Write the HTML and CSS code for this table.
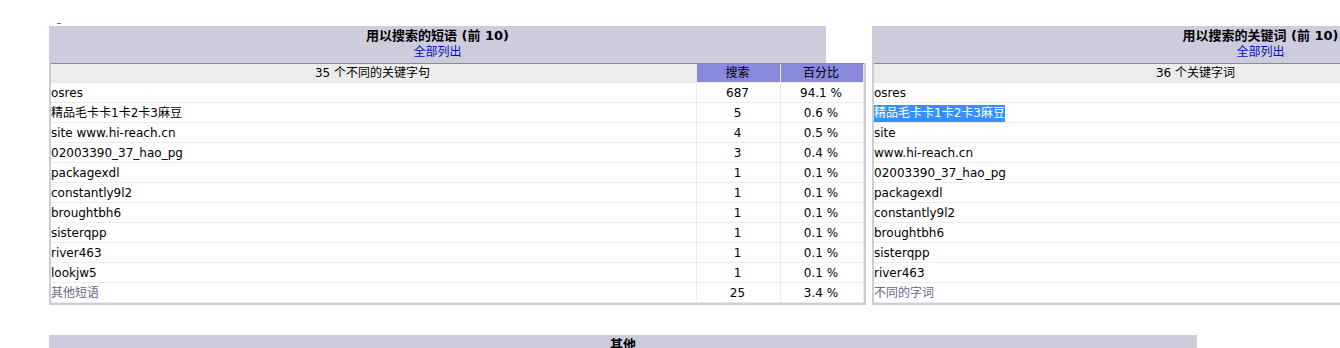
FILE: index.html
```html
<!DOCTYPE html>
<html lang="zh-CN">
<head>
<meta charset="utf-8">
<title>AWStats</title>
<link rel="stylesheet" href="styles.css">
</head>
<body>
<div class="page">
  <div class="topmark"><span class="dash"></span></div>

  <div class="pair">
    <section class="box">
      <div class="boxhead">
        <div class="title">用以搜索的短语 (前 10)<br><a href="#">全部列出</a></div>
        <div class="blank"></div>
      </div>
      <div class="boxbody">
        <table class="data">
          <thead>
            <tr>
              <th class="kw">35 个不同的关键字句</th>
              <th class="num">搜索</th>
              <th class="pct">百分比</th>
            </tr>
          </thead>
          <tbody>
            <tr><td class="aws">osres</td><td>687</td><td>94.1 %</td></tr>
            <tr><td class="aws">精品毛卡卡1卡2卡3麻豆</td><td>5</td><td>0.6 %</td></tr>
            <tr><td class="aws">site www.hi-reach.cn</td><td>4</td><td>0.5 %</td></tr>
            <tr><td class="aws">02003390_37_hao_pg</td><td>3</td><td>0.4 %</td></tr>
            <tr><td class="aws">packagexdl</td><td>1</td><td>0.1 %</td></tr>
            <tr><td class="aws">constantly9l2</td><td>1</td><td>0.1 %</td></tr>
            <tr><td class="aws">broughtbh6</td><td>1</td><td>0.1 %</td></tr>
            <tr><td class="aws">sisterqpp</td><td>1</td><td>0.1 %</td></tr>
            <tr><td class="aws">river463</td><td>1</td><td>0.1 %</td></tr>
            <tr><td class="aws">lookjw5</td><td>1</td><td>0.1 %</td></tr>
            <tr><td class="aws"><span class="muted">其他短语</span></td><td>25</td><td>3.4 %</td></tr>
          </tbody>
        </table>
      </div>
    </section>

    <section class="box">
      <div class="boxhead">
        <div class="title">用以搜索的关键词 (前 10)<br><a href="#">全部列出</a></div>
        <div class="blank"></div>
      </div>
      <div class="boxbody">
        <table class="data">
          <thead>
            <tr>
              <th class="kw">36 个关键字词</th>
              <th class="num">搜索</th>
              <th class="pct">百分比</th>
            </tr>
          </thead>
          <tbody>
            <tr><td class="aws">osres</td><td>687</td><td>93.8 %</td></tr>
            <tr><td class="aws"><span class="sel">精品毛卡卡1卡2卡3麻豆</span></td><td>5</td><td>0.6 %</td></tr>
            <tr><td class="aws">site</td><td>4</td><td>0.5 %</td></tr>
            <tr><td class="aws">www.hi-reach.cn</td><td>4</td><td>0.5 %</td></tr>
            <tr><td class="aws">02003390_37_hao_pg</td><td>3</td><td>0.4 %</td></tr>
            <tr><td class="aws">packagexdl</td><td>1</td><td>0.1 %</td></tr>
            <tr><td class="aws">constantly9l2</td><td>1</td><td>0.1 %</td></tr>
            <tr><td class="aws">broughtbh6</td><td>1</td><td>0.1 %</td></tr>
            <tr><td class="aws">sisterqpp</td><td>1</td><td>0.1 %</td></tr>
            <tr><td class="aws">river463</td><td>1</td><td>0.1 %</td></tr>
            <tr><td class="aws"><span class="muted">不同的字词</span></td><td>26</td><td>3.5 %</td></tr>
          </tbody>
        </table>
      </div>
    </section>
  </div>

  <section class="other">
    <div class="title wide">其他</div>
  </section>
</div>
</body>
</html>
```

FILE: styles.css
```css
html {
  overflow: hidden;
}

body {
  margin: 0;
  background: #ffffff;
  color: #000000;
  font-family: "DejaVu Sans", "Noto Sans CJK SC", sans-serif;
  font-size: 12px;
}

.page {
  width: 1640px;
  padding-left: 49px;
}

.topmark {
  height: 26px;
}

.dash {
  display: block;
  width: 4px;
  height: 1px;
  margin-left: 8px;
  position: relative;
  top: 23px;
  background: #6e6e6e;
}

.pair {
  display: flex;
  gap: 6px;
}

.box {
  width: 817px;
  flex: none;
}

.boxhead {
  display: flex;
  height: 37px;
}

.title {
  width: 777px;
  box-sizing: border-box;
  background: #ccccdd;
  text-align: center;
  font-size: 13px;
  font-weight: bold;
  line-height: 16px;
  padding-top: 2px;
}

.title a {
  font-size: 12px;
  font-weight: normal;
  color: #0011bb;
  text-decoration: none;
}

.blank {
  flex: 1;
  background: #ffffff;
}

.boxbody {
  background: #ccccdd;
  padding: 0 2px 2px 2px;
}

.data {
  width: 813px;
  table-layout: fixed;
  border-collapse: separate;
  border-spacing: 0;
  border-top: 1px solid #8c8c8c;
  background: #ffffff;
}

.data th,
.data td {
  box-sizing: border-box;
  border-right: 1px solid #ececec;
  border-bottom: 1px solid #ececec;
  padding: 0 2px 0 0;
  font-size: 12px;
  font-weight: normal;
  text-align: center;
  vertical-align: middle;
  white-space: nowrap;
}

.data th {
  height: 19px;
  background: #ececec;
  line-height: 17px;
}

.data th.num {
  width: 84px;
  background: #8888dd;
}

.data th.pct {
  width: 83px;
  background: #8888dd;
}

.data td {
  height: 20px;
  line-height: 18px;
}

.data td.aws {
  text-align: left;
  padding-left: 0;
}

.muted {
  color: #666688;
}

.sel {
  background: #3390ff;
  color: #ffffff;
  padding: 1px 0 2px;
}

.other {
  margin-top: 30px;
  width: 1148px;
}

.title.wide {
  width: 1148px;
  height: 37px;
}
```
